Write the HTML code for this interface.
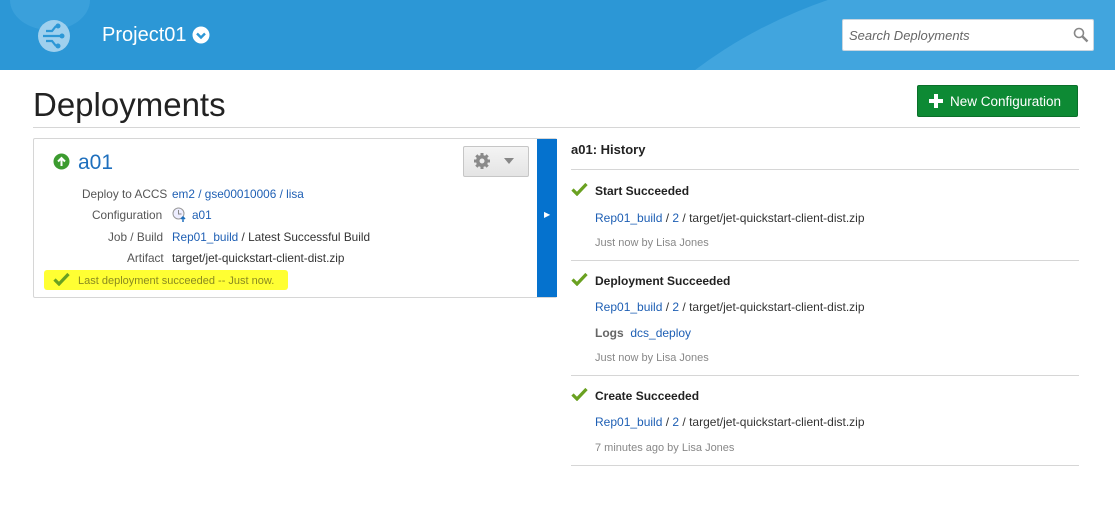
<!DOCTYPE html>
<html><head><style>
*{margin:0;padding:0;box-sizing:border-box}
html,body{width:1115px;height:528px;overflow:hidden}
body{background:#fff;font-family:"Liberation Sans",sans-serif;font-size:12px;color:#333;position:relative}
.a{position:absolute;white-space:nowrap}
.l{color:#1e5fb4}
.g{color:#888}
.hdr{position:absolute;left:0;top:0;width:1115px;height:70px;background:#2c97d6;overflow:hidden}
.sep{position:absolute;height:1px;background:#d6d6d6}
.t{line-height:14px}
.ck{position:absolute}
</style></head><body>
<div class="hdr">
 <div style="position:absolute;left:560px;top:-30px;width:900px;height:700px;border-radius:50%;background:#41a5de"></div>
 <div style="position:absolute;left:10px;top:-30px;width:80px;height:60px;border-radius:50%;background:#3aa0db"></div>
 <svg style="position:absolute;left:37px;top:19px" width="34" height="34" viewBox="0 0 34 34"><circle cx="17" cy="17" r="16" fill="#9fd0ee"/><g stroke="#2c97d6" stroke-width="2.2" fill="none"><path d="M6 17h10M9 12h6l4-5M9 22h6l4 5M16 17h8"/></g><circle cx="21" cy="7" r="2.5" fill="#2c97d6"/><circle cx="25" cy="17" r="2.5" fill="#2c97d6"/><circle cx="21" cy="27" r="2.5" fill="#2c97d6"/></svg>
 <div class="a" style="left:102px;top:24px;font-size:20px;color:#fff">Project01</div>
 <svg style="position:absolute;left:192px;top:26px" width="18" height="18" viewBox="0 0 18 18"><circle cx="9" cy="9" r="8.5" fill="#fff"/><path d="M5 7.5l4 4 4-4" stroke="#2c97d6" stroke-width="2.4" fill="none"/></svg>
 <div style="position:absolute;left:842px;top:19px;width:252px;height:32px;background:#fff;border:1px solid #c9d6e0;border-radius:2px"></div>
 <div class="a" style="left:849px;top:28px;font-size:13px;font-style:italic;color:#666">Search Deployments</div>
 <svg style="position:absolute;left:1073px;top:27px" width="16" height="16" viewBox="0 0 16 16"><circle cx="6" cy="6" r="4.5" stroke="#888" stroke-width="1.6" fill="none"/><path d="M9.5 9.5l5 5" stroke="#888" stroke-width="2.4"/></svg>
</div>
<div class="a" style="left:33px;top:86px;font-size:33px;color:#222">Deployments</div>
<div class="sep" style="left:33px;top:127px;width:1047px"></div>
<div style="position:absolute;left:917px;top:85px;width:161px;height:32px;background:#0d8a34;border:1px solid #0a6f2a;border-radius:2px"></div>
<svg style="position:absolute;left:928px;top:93px" width="16" height="16" viewBox="0 0 16 16"><path d="M8 1v14M1 8h14" stroke="#fff" stroke-width="4"/></svg>
<div class="a" style="left:950px;top:94px;font-size:13.5px;color:#fff">New Configuration</div>

<div style="position:absolute;left:33px;top:138px;width:524px;height:160px;border:1px solid #d6d6d6;border-radius:2px"></div>
<div style="position:absolute;left:537px;top:139px;width:20px;height:158px;background:#0572ce"></div>
<div class="a" style="left:544px;top:210px;color:#fff;font-size:8px">&#9654;</div>
<svg style="position:absolute;left:53px;top:153px" width="17" height="17" viewBox="0 0 17 17"><circle cx="8.5" cy="8.5" r="8" fill="#3c9b2f"/><path d="M8.5 13V5M5 8.5l3.5-3.5 3.5 3.5" stroke="#fff" stroke-width="2" fill="none"/></svg>
<div class="a l" style="left:78px;top:151px;font-size:21px;color:#1e6fbd">a01</div>
<div style="position:absolute;left:463px;top:146px;width:66px;height:31px;background:linear-gradient(#f4f4f4,#e4e4e4);border:1px solid #c6c6c6;border-radius:2px"></div>
<svg style="position:absolute;left:473px;top:152px" width="18" height="18" viewBox="0 0 18 18"><g stroke="#8a8a8a" stroke-width="3"><path d="M9 1v16M1 9h16M3.3 3.3l11.4 11.4M14.7 3.3L3.3 14.7"/></g><circle cx="9" cy="9" r="6" fill="#8a8a8a"/><circle cx="9" cy="9" r="2.5" fill="#ececec"/></svg>
<svg style="position:absolute;left:504px;top:158px" width="10" height="6" viewBox="0 0 10 6"><path d="M0 0h10L5 6z" fill="#888"/></svg>
<div class="a t" style="left:82px;top:187px;color:#555;font-size:11.8px">Deploy to ACCS</div><div class="a t l" style="left:172px;top:187px;font-size:11.8px">em2 / gse00010006 / lisa</div>
<div class="a t" style="left:92px;top:208px;color:#555;font-size:11.8px">Configuration</div>
<svg style="position:absolute;left:172px;top:207px" width="15" height="15" viewBox="0 0 15 15"><circle cx="6.5" cy="6.5" r="5.5" fill="#eef" stroke="#999"/><path d="M6.5 3v4h3" stroke="#888" fill="none"/><path d="M11 15v-5M9 12l2-2 2 2" stroke="#1e6fbd" stroke-width="1.5" fill="none"/></svg>
<div class="a t l" style="left:192px;top:208px;font-size:11.8px">a01</div>
<div class="a t" style="left:108px;top:230px;color:#555;font-size:11.8px">Job / Build</div><div class="a t" style="left:172px;top:230px;font-size:11.8px"><span class="l">Rep01_build</span> / Latest Successful Build</div>
<div class="a t" style="left:127px;top:251px;color:#555;font-size:11.8px">Artifact</div><div class="a t" style="left:172px;top:251px;font-size:11.8px">target/jet-quickstart-client-dist.zip</div>
<div style="position:absolute;left:44px;top:270px;width:244px;height:20px;background:#ffff33;border-radius:3px"></div>
<svg class="ck" style="left:53px;top:272px" width="17" height="14" viewBox="0 0 17 14"><path d="M1.5 7.5l4.5 4.5L15.5 2" stroke="#6aa121" stroke-width="3.2" fill="none"/></svg>
<div class="a t" style="left:78px;top:274px;color:#8a8a20;font-size:11px">Last deployment succeeded -- Just now.</div>

<div class="a" style="left:571px;top:142px;font-size:13px;font-weight:bold;color:#222">a01: History</div>
<div class="sep" style="left:571px;top:169px;width:508px"></div>
<svg class="ck" style="left:571px;top:182px" width="17" height="14" viewBox="0 0 17 14"><path d="M1.5 7.5l4.5 4.5L15.5 2" stroke="#6aa121" stroke-width="3.2" fill="none"/></svg>
<div class="a t" style="left:595px;top:184px;font-weight:bold;color:#222">Start Succeeded</div>
<div class="a t" style="left:595px;top:211px"><span class="l">Rep01_build</span> / <span class="l">2</span> / target/jet-quickstart-client-dist.zip</div>
<div class="a t g" style="left:595px;top:236px;font-size:11px">Just now by Lisa Jones</div>
<div class="sep" style="left:571px;top:260px;width:508px"></div>
<svg class="ck" style="left:571px;top:272px" width="17" height="14" viewBox="0 0 17 14"><path d="M1.5 7.5l4.5 4.5L15.5 2" stroke="#6aa121" stroke-width="3.2" fill="none"/></svg>
<div class="a t" style="left:595px;top:274px;font-weight:bold;color:#222">Deployment Succeeded</div>
<div class="a t" style="left:595px;top:300px"><span class="l">Rep01_build</span> / <span class="l">2</span> / target/jet-quickstart-client-dist.zip</div>
<div class="a t" style="left:595px;top:326px"><span style="color:#666;font-weight:bold">Logs</span>&nbsp; <span class="l">dcs_deploy</span></div>
<div class="a t g" style="left:595px;top:351px;font-size:11px">Just now by Lisa Jones</div>
<div class="sep" style="left:571px;top:375px;width:508px"></div>
<svg class="ck" style="left:571px;top:387px" width="17" height="14" viewBox="0 0 17 14"><path d="M1.5 7.5l4.5 4.5L15.5 2" stroke="#6aa121" stroke-width="3.2" fill="none"/></svg>
<div class="a t" style="left:595px;top:389px;font-weight:bold;color:#222">Create Succeeded</div>
<div class="a t" style="left:595px;top:415px"><span class="l">Rep01_build</span> / <span class="l">2</span> / target/jet-quickstart-client-dist.zip</div>
<div class="a t g" style="left:595px;top:441px;font-size:11px">7 minutes ago by Lisa Jones</div>
<div class="sep" style="left:571px;top:465px;width:508px"></div>
</body></html>
